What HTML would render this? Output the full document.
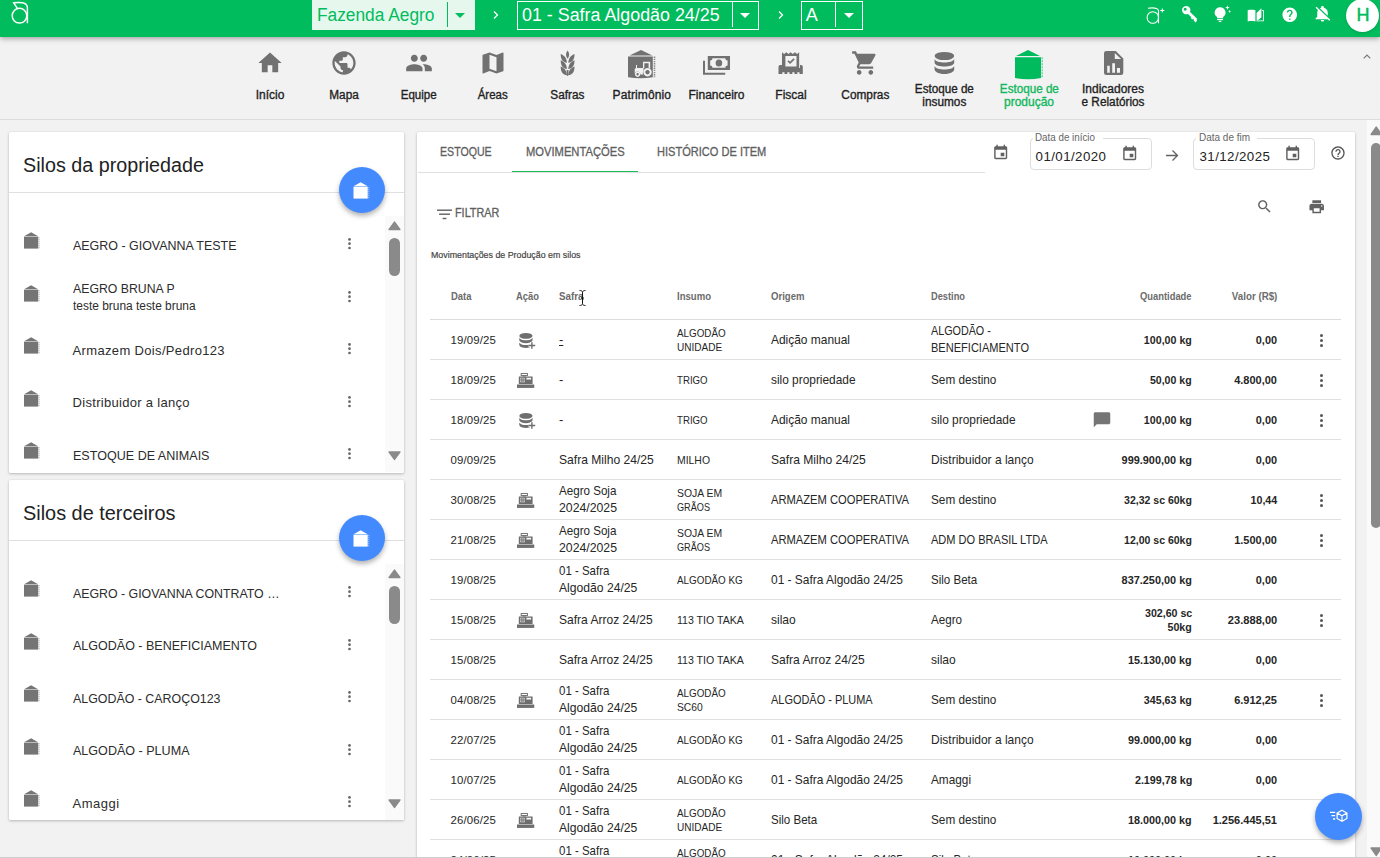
<!DOCTYPE html>
<html lang="pt-BR"><head><meta charset="utf-8"><title>Aegro - Estoque de produção</title>
<style>
html,body{margin:0;padding:0}
body{width:1380px;height:858px;overflow:hidden;position:relative;background:#f2f2f2;font-family:"Liberation Sans",sans-serif;color:#222}
.t{position:absolute;white-space:nowrap;line-height:1}
.abs{position:absolute}
svg{position:absolute;overflow:visible}
#topbar{position:absolute;left:0;top:0;width:1380px;height:37px;background:#00bc5d;box-shadow:0 2px 4px -1px rgba(0,0,0,.2),0 3px 5px 0 rgba(0,0,0,.15);z-index:5}
#nav{position:absolute;left:0;top:37px;width:1380px;height:82px;background:#f2f2f2;border-bottom:1px solid #dcdcdc}
.card{position:absolute;background:#fff;box-shadow:0 1px 3px rgba(0,0,0,.24),0 0 1px rgba(0,0,0,.12);border-radius:1.5px}
.hr{position:absolute;height:1px;background:#e0e0e0}
.fab{position:absolute;width:46px;height:46px;border-radius:50%;background:#448aff;box-shadow:0 3px 5px rgba(0,0,0,.3)}
.dots i{position:absolute;width:3px;height:3px;border-radius:50%;background:#666;left:0}
.dots{position:absolute;width:3px;height:13px}
.d2 i{width:2.700px;height:2.700px}
</style></head><body>
<svg width="0" height="0" style="display:none"><defs>
<symbol id="silo" viewBox="0 0 16 17"><path d="M0.100 4.200 L7.100 0.300 L14.100 4.200 Z"/><path d="M0 4.700 H14.200 V16.600 H0 Z"/><path d="M15.100 5 V16.600" stroke="currentColor" stroke-width="1.600" stroke-dasharray="1.200 0.800" fill="none" opacity=".35"/></symbol>
<symbol id="caret" viewBox="0 0 10 5"><path d="M0 0 H10 L5 5 Z"/></symbol>
<symbol id="cal" viewBox="0 0 24 24"><path d="M17 12h-5v5h5v-5zM16 1v2H8V1H6v2H5c-1.11 0-1.990.900-1.990 2L3 19c0 1.100.890 2 2 2h14c1.100 0 2-.900 2-2V5c0-1.100-.900-2-2-2h-1V1h-2zm3 18H5V8h14v11z"/></symbol>
<symbol id="dbadd" viewBox="0 0 17 16"><ellipse cx="6.900" cy="2.900" rx="6.600" ry="2.900"/><path d="M.300 4.800 C1.500 8.200 12.300 8.200 13.500 4.800 V7.600 C12.300 11 1.500 11 .300 7.600Z"/><path d="M.300 9.500 C1.500 12.900 12.300 12.900 13.500 9.500 V12.300 C12.300 15.900 1.500 15.900 .300 12.300Z"/><path d="M12.900 9.200 V15.800 M9.600 12.500 H16.200" stroke="#fff" stroke-width="3.600" fill="none"/><path d="M12.900 9.200 V15.800 M9.600 12.500 H16.200" stroke="currentColor" stroke-width="1.400" fill="none"/></symbol>
<symbol id="reg" viewBox="0 0 17.500 15"><rect x="0" y="11.500" width="17.500" height="3.400"/><path d="M1.800 3.400 H15.600 V10.900 H1.800 Z M3.300 4.700 V9.300 H7.600 V4.700 Z M9.400 4.700 V6.600 H14 V4.700 Z" fill-rule="evenodd"/><rect x="4.150" y=".450" width="6.300" height="2.100" fill="none" stroke="currentColor" stroke-width=".900"/><rect x="5.600" y="2.500" width="3" height="1"/><path d="M4.750 4.700V9.300M6.150 4.700V9.300M3.300 6.200H7.600M3.300 7.800H7.600" stroke="currentColor" stroke-width=".800"/></symbol>
</defs></svg>

<header id="topbar">
<svg style="left:10.500px;top:2px" width="18" height="23" viewBox="0 0 18 23" fill="none" stroke="#fff" stroke-width="1.500"><path d="M6.700 6.800 L2.700 .800 C8 .300 16 -.200 16.400 5.500 V21.300"/><ellipse cx="8.500" cy="13.700" rx="7.300" ry="7.400"/></svg>
<div class="abs" style="left:312px;top:0;width:163px;height:30px;background:#e6f8ee"></div>
<div class="abs" style="left:447px;top:2px;width:1px;height:25px;background:#00bc5d"></div>
<span class="t" style="top:6.06px;font-size:18px;font-weight:400;color:#00bc5d;left:317.40px;transform:scaleX(0.9616);transform-origin:0 0;">Fazenda Aegro</span>
<svg style="left:455px;top:13px" width="10" height="5" fill="#00bc5d"><use href="#caret"/></svg>
<svg style="left:492.5px;top:10.800px" width="6" height="8" viewBox="0 0 6 8" fill="none" stroke="#fff" stroke-width="1.300"><path d="M1 .500 L4.500 4 L1 7.500"/></svg>
<div class="abs" style="left:517px;top:1px;width:240px;height:27px;border:1px solid #fff"></div>
<div class="abs" style="left:732px;top:2px;width:1px;height:25px;background:#fff"></div>
<span class="t" style="top:6.06px;font-size:18px;font-weight:400;color:#fff;left:522.00px;transform:scaleX(0.9922);transform-origin:0 0;">01 - Safra Algodão 24/25</span>
<svg style="left:740px;top:13px" width="10" height="5" fill="#fff"><use href="#caret"/></svg>
<svg style="left:777.5px;top:10.800px" width="6" height="8" viewBox="0 0 6 8" fill="none" stroke="#fff" stroke-width="1.300"><path d="M1 .500 L4.500 4 L1 7.500"/></svg>
<div class="abs" style="left:801px;top:1px;width:60px;height:27px;border:1px solid #fff"></div>
<div class="abs" style="left:835px;top:2px;width:1px;height:25px;background:#fff"></div>
<span class="t" style="top:6.06px;font-size:18px;font-weight:400;color:#fff;left:805.80px;">A</span>
<svg style="left:843.5px;top:13px" width="10" height="5" fill="#fff"><use href="#caret"/></svg>
<svg style="left:1146px;top:7px" width="19" height="17" viewBox="0 0 19 17" fill="none" stroke="#fff" stroke-width="1.1"><path d="M2 1.300 C6 .600 12.300 .600 12.500 4 V16.200"/><ellipse cx="6.800" cy="10.500" rx="5.700" ry="5.800"/><path d="M16.300 1.500 V5.500 M14.300 3.500 H18.300" stroke-width="1"/></svg>
<svg style="left:0;top:0" width="1380" height="37" viewBox="0 0 1380 37" fill="#fff"><path d="M1188 12 L1196.300 20" stroke="#fff" stroke-width="3" fill="none"/><path d="M1193.600 20.600 l1.700 -1.700 l1.900 1.900 l-1.700 1.700z M1190.800 17.900 l1.500 -1.500 l1.500 1.500 l-1.500 1.500z"/><path fill-rule="evenodd" d="M1186.200 5.900 a4.200 4.200 0 1 0 .010 0z M1185.200 7.700 a1.500 1.500 0 1 1 -.010 0z"/><path d="M1220.100 7.200 a5.400 5.400 0 0 1 3 9.900 v1.200 h-6 v-1.200 a5.400 5.400 0 0 1 3 -9.900z"/><rect x="1217.100" y="19" width="6" height="1.100"/><path d="M1218.300 20.700 h3.600 l-1 1.200 h-1.600z"/><path d="M1227.400 5.300 l.6 1.700 1.700.6 -1.700.6 -.6 1.700 -.6-1.700 -1.700-.6 1.700-.6z M1229.700 9.800 l.45 1.150 1.150.45 -1.150.45 -.45 1.150 -.45-1.150 -1.150-.45 1.150-.45z"/><path d="M1247.700 10.300 C1250 9.700 1253 9.700 1255.400 10.300 V21.500 C1253 20.900 1250 20.900 1247.700 21.500Z"/><path d="M1256.600 13 L1261.400 8.200 V17.300 L1256.600 21.400Z"/><path d="M1262 10.500 H1263.500 V21 C1261.500 20.600 1259 20.700 1257.500 21.300" fill="none" stroke="#fff" stroke-width="1" opacity=".85"/></svg>
<svg style="left:1281px;top:6.300px" width="17.500" height="17.500" viewBox="0 0 24 24" fill="#fff"><path d="M12 2C6.480 2 2 6.480 2 12s4.480 10 10 10 10-4.480 10-10S17.520 2 12 2zm1 17h-2v-2h2v2zm2.070-7.750l-.9.920C13.450 12.900 13 13.500 13 15h-2v-.500c0-1.100.450-2.100 1.170-2.830l1.240-1.260c.370-.360.590-.860.590-1.410 0-1.100-.900-2-2-2s-2 .900-2 2H8c0-2.210 1.790-4 4-4s4 1.790 4 4c0 .880-.360 1.680-.930 2.250z"/></svg>
<svg style="left:1311.500px;top:4px" width="21" height="19.200" viewBox="0 0 24 24" preserveAspectRatio="none" fill="#fff"><path d="M20 18.690L7.840 6.140 5.270 3.490 4 4.760l2.800 2.800v.010c-.520.990-.800 2.160-.800 3.420v5l-2 2v1h13.730l2 2L21 19.720l-1-1.030zM12 22c1.110 0 2-.890 2-2h-4c0 1.110.890 2 2 2zm6-7.320V11c0-3.080-1.640-5.640-4.500-6.320V4c0-.830-.670-1.500-1.500-1.500s-1.500.670-1.500 1.500v.680c-.150.030-.290.080-.420.120-.100.030-.200.070-.300.110h-.010c-.010 0-.010 0-.020.010-.230.090-.460.200-.680.310 0 0-.010 0-.010.010L18 14.680z"/></svg>
<div class="abs" style="left:1346px;top:-1px;width:33px;height:33px;border-radius:50%;background:#fff;box-shadow:0 1px 3px rgba(0,0,0,.15)"></div>
<span class="t" style="top:5.76px;font-size:18px;font-weight:400;color:#00bc5d;left:1356.50px;-webkit-text-stroke:.5px #00bc5d;">H</span>
</header>
<div id="nav"></div>
<nav>
<svg style="left:256.0px;top:49.0px" width="28" height="28" viewBox="0 0 24 24" fill="#717171"><path d="M10 20v-6h4v6h5v-8h3L12 3 2 12h3v8z"/></svg>
<svg style="left:330.0px;top:49.0px" width="28" height="28" viewBox="0 0 24 24" fill="#717171"><path d="M12 2C6.480 2 2 6.480 2 12s4.480 10 10 10 10-4.480 10-10S17.520 2 12 2zm-1 17.930c-3.950-.490-7-3.850-7-7.930 0-.620.080-1.210.210-1.790L9 15v1c0 1.100.900 2 2 2v1.930zm6.900-2.540c-.260-.810-1-1.390-1.900-1.390h-1v-3c0-.550-.450-1-1-1H8v-2h2c.550 0 1-.450 1-1V7h2c1.100 0 2-.900 2-2v-.410c2.930 1.190 5 4.060 5 7.410 0 2.080-.800 3.970-2.100 5.390z"/></svg>
<svg style="left:405.0px;top:49.0px" width="28" height="28" viewBox="0 0 24 24" fill="#717171"><path d="M16 11c1.660 0 2.990-1.340 2.990-3S17.660 5 16 5c-1.660 0-3 1.340-3 3s1.340 3 3 3zm-8 0c1.660 0 2.990-1.340 2.990-3S9.660 5 8 5C6.340 5 5 6.340 5 8s1.340 3 3 3zm0 2c-2.330 0-7 1.170-7 3.500V19h14v-2.500c0-2.330-4.670-3.500-7-3.500zm8 0c-.290 0-.620.020-.970.050 1.160.840 1.970 1.970 1.970 3.450V19h6v-2.500c0-2.330-4.670-3.500-7-3.500z"/></svg>
<svg style="left:479.0px;top:49.0px" width="28" height="28" viewBox="0 0 24 24" fill="#717171"><path d="M20.500 3l-.160.030L15 5.100 9 3 3.360 4.900c-.210.070-.360.250-.360.480V20.500c0 .280.220.500.500.500l.160-.030L9 18.900l6 2.100 5.640-1.900c.210-.070.360-.250.360-.480V3.500c0-.280-.220-.500-.500-.500zM15 19l-6-2.110V5l6 2.110V19z"/></svg>
<svg style="left:0;top:0" width="1380" height="120" viewBox="0 0 1380 120" fill="#717171"><path d="M567.600 50.400 C569.700 53 569.700 56.200 567.600 58.800 C565.500 56.200 565.500 53 567.600 50.400Z"/><path d="M560.700 54.0 C564 55.2 566.400 57.5 567 62.8 C563 62.5 560.500 59.0 560.700 54.0Z"/><path d="M574.500 54.0 C571.200 55.2 568.800 57.5 568.200 62.8 C572.200 62.5 574.700 59.0 574.500 54.0Z"/><path d="M560.700 60.2 C564 61.4 566.400 63.7 567 69.0 C563 68.7 560.500 65.2 560.700 60.2Z"/><path d="M574.500 60.2 C571.200 61.4 568.800 63.7 568.200 69.0 C572.200 68.7 574.700 65.2 574.500 60.2Z"/><path d="M560.700 66.4 C564 67.6 566.400 69.9 567 75.2 C563 74.9 560.500 71.4 560.700 66.4Z"/><path d="M574.500 66.4 C571.200 67.6 568.800 69.9 568.200 75.2 C572.200 74.9 574.700 71.4 574.500 66.4Z"/><path d="M566.700 70 H568.500 V75 L567.600 76.300 L566.700 75Z"/></svg>
<svg style="left:0;top:0" width="1380" height="120" viewBox="0 0 1380 120" fill="#717171"><path d="M629.500 55.400 L641 49.900 L652.500 55.400Z"/><path d="M628 56.500 H652.800 V77.300 Q640.400 79.300 628 77.300Z"/><path d="M654.500 56.500 V77.300" stroke="#8a8a8a" stroke-width="1.600" stroke-dasharray="1.400 .8" fill="none"/><g fill="#f2f2f2"><path d="M643 61.800 H650.200 V68.500 H648.600 V63.200 H644.300 V68 H643Z"/><path d="M636 65 H637 V68 H643.500 V70.500 A4.500 4.500 0 0 0 643 74.500 H640.500 A3 3 0 0 0 634.700 73.500 V69 L636 68Z"/><path fill-rule="evenodd" d="M647.500 68 a4.200 4.200 0 1 0 .010 0z M647.500 70 a2.200 2.200 0 1 1 -.010 0z"/><path fill-rule="evenodd" d="M637.600 71.500 a2.700 2.700 0 1 0 .010 0z M637.600 73 a1.200 1.200 0 1 1 -.010 0z"/></g></svg>
<svg style="left:0;top:0" width="1380" height="120" viewBox="0 0 1380 120" fill="#717171"><path fill-rule="evenodd" d="M707.800 56 H730 V70.100 H707.800Z M712.500 58.300 A2.300 2.300 0 0 1 710.200 60.600 V65.500 A2.300 2.300 0 0 1 712.500 67.800 H725.300 A2.300 2.300 0 0 1 727.600 65.500 V60.600 A2.300 2.300 0 0 1 725.300 58.300Z"/><ellipse cx="718.900" cy="63.050" rx="3.300" ry="3.500"/><path d="M703 60.700 H705 V72.800 H725.200 V74.800 H703Z"/></svg>
<svg style="left:0;top:0" width="1380" height="120" viewBox="0 0 1380 120" fill="#717171"><path fill-rule="evenodd" d="M782 52.300 l2.150 1.800 2.150-1.800 2.150 1.800 2.150-1.800 2.150 1.800 2.150-1.800 2.150 1.800 2.100-1.800 V68.200 H782Z M785.400 56 V66.500 H796.500 V56Z"/><path d="M788 60.800 l2.100 2.100 4-4" stroke="#717171" stroke-width="1.700" fill="none"/><path d="M780.500 65 H782 V68 H800 V65 H801 A1.800 1.800 0 0 1 802.800 66.800 V74 H799.500 V72.300 H797.300 V74 H794.500 V72.300 H792.300 V74 H789.500 V72.300 H787.300 V74 H784.500 V72.300 H782.300 V74 H778.500 V66.800 A1.800 1.800 0 0 1 780.500 65Z"/></svg>
<svg style="left:851.3px;top:48.8px" width="28" height="28" viewBox="0 0 24 24" fill="#717171"><path d="M7 18c-1.100 0-1.990.900-1.990 2S5.900 22 7 22s2-.900 2-2-.900-2-2-2zM1 2v2h2l3.600 7.590-1.350 2.450c-.160.280-.250.610-.250.960 0 1.100.900 2 2 2h12v-2H7.420c-.140 0-.250-.110-.250-.250l.030-.120.900-1.630h7.450c.750 0 1.410-.410 1.750-1.030l3.580-6.490c.080-.140.120-.310.120-.480 0-.550-.450-1-1-1H5.210l-.940-2H1zm16 16c-1.100 0-1.990.900-1.990 2s.890 2 1.990 2 2-.900 2-2-.900-2-2-2z"/></svg>
<svg style="left:0;top:0" width="1380" height="120" viewBox="0 0 1380 120" fill="#717171"><ellipse cx="944.400" cy="56" rx="9.800" ry="4.100"/><path d="M934.600 59 C936 63.700 952.800 63.700 954.200 59 V63 C952.800 67.800 936 67.800 934.600 63Z"/><path d="M934.600 66 C936 70.700 952.800 70.700 954.200 66 V69.800 C952.800 75.400 936 75.400 934.600 69.800Z"/></svg>
<svg style="left:1015px;top:49.500px" width="28" height="30" viewBox="0 0 28 30" fill="#00bb5d"><path d="M1 6 L13 0 L25 6Z"/><path d="M0 7.200 H26 V28 Q13 30.500 0 28Z"/><path d="M27.200 7.200V28" stroke="#00bb5d" stroke-width="1.300" stroke-dasharray="2 1" opacity=".6"/></svg>
<svg style="left:0;top:0" width="1380" height="120" viewBox="0 0 1380 120" fill="#717171"><path fill-rule="evenodd" d="M1106.300 50.900 H1115.800 L1123.300 58.400 V72.700 A2.300 2.300 0 0 1 1121 75 H1106.300 A2.300 2.300 0 0 1 1104 72.700 V53.200 A2.300 2.300 0 0 1 1106.300 50.900Z M1114.800 53.100 V59.100 H1121.100Z M1107.200 65.800 V72.800 H1109.800 V65.800Z M1112.200 63.200 V72.800 H1115 V63.200Z M1116.900 68 V72.800 H1120 V68Z"/></svg>
<span class="t" style="top:88.84px;font-size:12px;font-weight:400;color:#1f1f1f;left:255.66px;-webkit-text-stroke:.35px #1f1f1f;">Início</span>
<span class="t" style="top:88.84px;font-size:12px;font-weight:400;color:#1f1f1f;left:328.98px;transform:scaleX(0.9823);transform-origin:50% 0;-webkit-text-stroke:.35px #1f1f1f;">Mapa</span>
<span class="t" style="top:88.84px;font-size:12px;font-weight:400;color:#1f1f1f;left:400.31px;transform:scaleX(0.9632);transform-origin:50% 0;-webkit-text-stroke:.35px #1f1f1f;">Equipe</span>
<span class="t" style="top:88.84px;font-size:12px;font-weight:400;color:#1f1f1f;left:477.32px;transform:scaleX(0.9567);transform-origin:50% 0;-webkit-text-stroke:.35px #1f1f1f;">Áreas</span>
<span class="t" style="top:88.84px;font-size:12px;font-weight:400;color:#1f1f1f;left:549.66px;transform:scaleX(0.9802);transform-origin:50% 0;-webkit-text-stroke:.35px #1f1f1f;">Safras</span>
<span class="t" style="top:88.84px;font-size:12px;font-weight:400;color:#1f1f1f;left:612.55px;letter-spacing:0.127px;-webkit-text-stroke:.35px #1f1f1f;">Patrimônio</span>
<span class="t" style="top:88.84px;font-size:12px;font-weight:400;color:#1f1f1f;left:688.48px;-webkit-text-stroke:.35px #1f1f1f;">Financeiro</span>
<span class="t" style="top:88.84px;font-size:12px;font-weight:400;color:#1f1f1f;left:775.33px;-webkit-text-stroke:.35px #1f1f1f;">Fiscal</span>
<span class="t" style="top:88.84px;font-size:12px;font-weight:400;color:#1f1f1f;left:840.66px;transform:scaleX(0.9859);transform-origin:50% 0;-webkit-text-stroke:.35px #1f1f1f;">Compras</span>
<span class="t" style="top:82.84px;font-size:12px;font-weight:400;color:#1f1f1f;left:913.64px;transform:scaleX(0.9717);transform-origin:50% 0;-webkit-text-stroke:.35px #1f1f1f;">Estoque de</span>
<span class="t" style="top:95.84px;font-size:12px;font-weight:400;color:#1f1f1f;left:921.66px;transform:scaleX(0.9846);transform-origin:50% 0;-webkit-text-stroke:.35px #1f1f1f;">insumos</span>
<span class="t" style="top:82.84px;font-size:12px;font-weight:400;color:#12b85e;left:998.64px;transform:scaleX(0.9717);transform-origin:50% 0;-webkit-text-stroke:.35px #12b85e;">Estoque de</span>
<span class="t" style="top:95.84px;font-size:12px;font-weight:400;color:#12b85e;left:1003.98px;-webkit-text-stroke:.35px #12b85e;">produção</span>
<span class="t" style="top:82.84px;font-size:12px;font-weight:400;color:#1f1f1f;left:1081.98px;-webkit-text-stroke:.35px #1f1f1f;">Indicadores</span>
<span class="t" style="top:95.84px;font-size:12px;font-weight:400;color:#1f1f1f;left:1080.98px;transform:scaleX(0.9839);transform-origin:50% 0;-webkit-text-stroke:.35px #1f1f1f;">e Relatórios</span>
<svg style="left:1362.500px;top:54px" width="8" height="5" viewBox="0 0 8 5" fill="none" stroke="#777" stroke-width="1.200"><path d="M.7 4.300 L4 1 L7.300 4.300"/></svg>
</nav>
<aside>
<div class="card" style="left:9px;top:132px;width:395px;height:341px"></div>
<span class="t" style="top:154.57px;font-size:20px;font-weight:400;color:#222;left:23.30px;transform:scaleX(0.9865);transform-origin:0 0;">Silos da propriedade</span>
<div class="hr" style="left:9px;top:191.5px;width:395px"></div>
<div class="abs" style="left:385px;top:215.5px;width:19px;height:256.500px;background:#fafafa"></div>
<svg style="left:388px;top:220.5px" width="13" height="9.500" fill="#8a8a8a" stroke="#8a8a8a" stroke-width="1.600" stroke-linejoin="round" viewBox="0 0 13 9.500"><path d="M1.200 8.500 L6.500 1.200 L11.800 8.500Z"/></svg>
<div class="abs" style="left:389.200px;top:238px;width:10.800px;height:38px;border-radius:5.400px;background:#8a8a8a"></div>
<svg style="left:388px;top:451.3px" width="13" height="9.500" fill="#8a8a8a" stroke="#8a8a8a" stroke-width="1.600" stroke-linejoin="round" viewBox="0 0 13 9.500"><path d="M1.200 1 L6.500 8.300 L11.800 1Z"/></svg>
<div class="fab" style="left:338.500px;top:167px"></div>
<svg style="left:353px;top:181.5px" width="17" height="17" fill="#fff" color="#fff"><use href="#silo"/></svg>
<svg style="left:24px;top:232.0px" width="16" height="17" fill="#757575" color="#757575"><use href="#silo"/></svg>
<span class="t" style="top:239.00px;font-size:13px;font-weight:400;color:#2c2c2c;left:72.60px;transform:scaleX(0.9576);transform-origin:0 0;">AEGRO - GIOVANNA TESTE</span>
<svg style="left:348.200px;top:238.2px" width="3" height="12" viewBox="0 0 3 12" fill="#666"><circle cx="1.500" cy="1.400" r="1.350"/><circle cx="1.500" cy="5.700" r="1.350"/><circle cx="1.500" cy="10" r="1.350"/></svg>
<svg style="left:24px;top:284.6px" width="16" height="17" fill="#757575" color="#757575"><use href="#silo"/></svg>
<span class="t" style="top:281.70px;font-size:13px;font-weight:400;color:#2c2c2c;left:72.60px;transform:scaleX(0.9448);transform-origin:0 0;">AEGRO BRUNA P</span>
<span class="t" style="top:299.84px;font-size:12px;font-weight:400;color:#2c2c2c;left:72.60px;transform:scaleX(0.9933);transform-origin:0 0;">teste bruna teste bruna</span>
<svg style="left:348.200px;top:290.8px" width="3" height="12" viewBox="0 0 3 12" fill="#666"><circle cx="1.500" cy="1.400" r="1.350"/><circle cx="1.500" cy="5.700" r="1.350"/><circle cx="1.500" cy="10" r="1.350"/></svg>
<svg style="left:24px;top:337.1px" width="16" height="17" fill="#757575" color="#757575"><use href="#silo"/></svg>
<span class="t" style="top:344.00px;font-size:13px;font-weight:400;color:#2c2c2c;left:72.60px;letter-spacing:0.338px;">Armazem Dois/Pedro123</span>
<svg style="left:348.200px;top:343.3px" width="3" height="12" viewBox="0 0 3 12" fill="#666"><circle cx="1.500" cy="1.400" r="1.350"/><circle cx="1.500" cy="5.700" r="1.350"/><circle cx="1.500" cy="10" r="1.350"/></svg>
<svg style="left:24px;top:389.6px" width="16" height="17" fill="#757575" color="#757575"><use href="#silo"/></svg>
<span class="t" style="top:396.20px;font-size:13px;font-weight:400;color:#2c2c2c;left:72.60px;letter-spacing:0.301px;">Distribuidor a lanço</span>
<svg style="left:348.200px;top:395.8px" width="3" height="12" viewBox="0 0 3 12" fill="#666"><circle cx="1.500" cy="1.400" r="1.350"/><circle cx="1.500" cy="5.700" r="1.350"/><circle cx="1.500" cy="10" r="1.350"/></svg>
<svg style="left:24px;top:442.2px" width="16" height="17" fill="#757575" color="#757575"><use href="#silo"/></svg>
<span class="t" style="top:449.00px;font-size:13px;font-weight:400;color:#2c2c2c;left:72.60px;transform:scaleX(0.9656);transform-origin:0 0;">ESTOQUE DE ANIMAIS</span>
<svg style="left:348.200px;top:448.4px" width="3" height="12" viewBox="0 0 3 12" fill="#666"><circle cx="1.500" cy="1.400" r="1.350"/><circle cx="1.500" cy="5.700" r="1.350"/><circle cx="1.500" cy="10" r="1.350"/></svg>
<div class="card" style="left:9px;top:480px;width:395px;height:340px"></div>
<span class="t" style="top:502.57px;font-size:20px;font-weight:400;color:#222;left:23.30px;transform:scaleX(0.9941);transform-origin:0 0;">Silos de terceiros</span>
<div class="hr" style="left:9px;top:539.5px;width:395px"></div>
<div class="abs" style="left:385px;top:563.5px;width:19px;height:256.500px;background:#fafafa"></div>
<svg style="left:388px;top:568.5px" width="13" height="9.500" fill="#8a8a8a" stroke="#8a8a8a" stroke-width="1.600" stroke-linejoin="round" viewBox="0 0 13 9.500"><path d="M1.200 8.500 L6.500 1.200 L11.800 8.500Z"/></svg>
<div class="abs" style="left:389.200px;top:586px;width:10.800px;height:38px;border-radius:5.400px;background:#8a8a8a"></div>
<svg style="left:388px;top:799.3px" width="13" height="9.500" fill="#8a8a8a" stroke="#8a8a8a" stroke-width="1.600" stroke-linejoin="round" viewBox="0 0 13 9.500"><path d="M1.200 1 L6.500 8.300 L11.800 1Z"/></svg>
<div class="fab" style="left:338.500px;top:515px"></div>
<svg style="left:353px;top:529.5px" width="17" height="17" fill="#fff" color="#fff"><use href="#silo"/></svg>
<svg style="left:24px;top:580.0px" width="16" height="17" fill="#757575" color="#757575"><use href="#silo"/></svg>
<span class="t" style="top:587.00px;font-size:13px;font-weight:400;color:#2c2c2c;left:72.60px;transform:scaleX(0.9498);transform-origin:0 0;">AEGRO - GIOVANNA CONTRATO …</span>
<svg style="left:348.200px;top:586.2px" width="3" height="12" viewBox="0 0 3 12" fill="#666"><circle cx="1.500" cy="1.400" r="1.350"/><circle cx="1.500" cy="5.700" r="1.350"/><circle cx="1.500" cy="10" r="1.350"/></svg>
<svg style="left:24px;top:632.5px" width="16" height="17" fill="#757575" color="#757575"><use href="#silo"/></svg>
<span class="t" style="top:639.20px;font-size:13px;font-weight:400;color:#2c2c2c;left:72.60px;transform:scaleX(0.9624);transform-origin:0 0;">ALGODÃO - BENEFICIAMENTO</span>
<svg style="left:348.200px;top:638.7px" width="3" height="12" viewBox="0 0 3 12" fill="#666"><circle cx="1.500" cy="1.400" r="1.350"/><circle cx="1.500" cy="5.700" r="1.350"/><circle cx="1.500" cy="10" r="1.350"/></svg>
<svg style="left:24px;top:685.1px" width="16" height="17" fill="#757575" color="#757575"><use href="#silo"/></svg>
<span class="t" style="top:692.00px;font-size:13px;font-weight:400;color:#2c2c2c;left:72.60px;transform:scaleX(0.9540);transform-origin:0 0;">ALGODÃO - CAROÇO123</span>
<svg style="left:348.200px;top:691.3px" width="3" height="12" viewBox="0 0 3 12" fill="#666"><circle cx="1.500" cy="1.400" r="1.350"/><circle cx="1.500" cy="5.700" r="1.350"/><circle cx="1.500" cy="10" r="1.350"/></svg>
<svg style="left:24px;top:737.6px" width="16" height="17" fill="#757575" color="#757575"><use href="#silo"/></svg>
<span class="t" style="top:744.20px;font-size:13px;font-weight:400;color:#2c2c2c;left:72.60px;transform:scaleX(0.9657);transform-origin:0 0;">ALGODÃO - PLUMA</span>
<svg style="left:348.200px;top:743.8px" width="3" height="12" viewBox="0 0 3 12" fill="#666"><circle cx="1.500" cy="1.400" r="1.350"/><circle cx="1.500" cy="5.700" r="1.350"/><circle cx="1.500" cy="10" r="1.350"/></svg>
<svg style="left:24px;top:790.2px" width="16" height="17" fill="#757575" color="#757575"><use href="#silo"/></svg>
<span class="t" style="top:797.00px;font-size:13px;font-weight:400;color:#2c2c2c;left:72.60px;letter-spacing:0.484px;">Amaggi</span>
<svg style="left:348.200px;top:796.4px" width="3" height="12" viewBox="0 0 3 12" fill="#666"><circle cx="1.500" cy="1.400" r="1.350"/><circle cx="1.500" cy="5.700" r="1.350"/><circle cx="1.500" cy="10" r="1.350"/></svg>
</aside>
<main>
<div class="card" style="left:417px;top:132px;width:938px;height:740px"></div>
<span class="t" style="top:145.84px;font-size:12px;font-weight:400;color:#5f5f5f;left:440.30px;transform:scaleX(0.8842);transform-origin:0 0;-webkit-text-stroke:.3px #5f5f5f;">ESTOQUE</span>
<span class="t" style="top:145.84px;font-size:12px;font-weight:400;color:#5f5f5f;left:525.70px;transform:scaleX(0.9320);transform-origin:0 0;-webkit-text-stroke:.3px #5f5f5f;">MOVIMENTAÇÕES</span>
<span class="t" style="top:145.84px;font-size:12px;font-weight:400;color:#5f5f5f;left:657.40px;transform:scaleX(0.9210);transform-origin:0 0;-webkit-text-stroke:.3px #5f5f5f;">HISTÓRICO DE ITEM</span>
<div class="hr" style="left:418px;top:172px;width:567px"></div>
<div class="abs" style="left:512px;top:170.500px;width:126px;height:1.500px;background:#18bc58"></div>
<svg style="left:991.800px;top:144.400px" width="17.400" height="17.400" viewBox="0 0 24 24" fill="#616161"><use href="#cal"/></svg>
<div class="abs" style="left:1030px;top:138px;width:120px;height:30px;border:1px solid #ddd;border-radius:4px"></div><div class="abs" style="left:1033px;top:136px;width:70px;height:4px;background:#fff"></div><span class="t" style="top:131.69px;font-size:11px;font-weight:400;color:#666;left:1035.00px;transform:scaleX(0.8920);transform-origin:0 0;">Data de início</span><span class="t" style="top:149.54px;font-size:13.3px;font-weight:400;color:#222;left:1035.60px;letter-spacing:0.426px;">01/01/2020</span><svg style="left:1120.5px;top:144.500px" width="17.400" height="17.400" viewBox="0 0 24 24" fill="#616161"><use href="#cal"/></svg>
<svg style="left:1165px;top:149px" width="14" height="13" viewBox="0 0 14 13" fill="none" stroke="#616161" stroke-width="1.300"><path d="M1 6.500 H12.500 M7.500 1.500 L12.500 6.500 L7.500 11.500"/></svg>
<div class="abs" style="left:1192.7px;top:138px;width:120px;height:30px;border:1px solid #ddd;border-radius:4px"></div><div class="abs" style="left:1195.7px;top:136px;width:61px;height:4px;background:#fff"></div><span class="t" style="top:131.69px;font-size:11px;font-weight:400;color:#666;left:1198.90px;transform:scaleX(0.9067);transform-origin:0 0;">Data de fim</span><span class="t" style="top:149.54px;font-size:13.3px;font-weight:400;color:#222;left:1199.50px;letter-spacing:0.426px;">31/12/2025</span><svg style="left:1284.4px;top:144.500px" width="17.400" height="17.400" viewBox="0 0 24 24" fill="#616161"><use href="#cal"/></svg>
<svg style="left:1329.500px;top:145px" width="16" height="16" viewBox="0 0 24 24" fill="#555"><path d="M11 18h2v-2h-2v2zm1-16C6.480 2 2 6.480 2 12s4.480 10 10 10 10-4.480 10-10S17.520 2 12 2zm0 18c-4.410 0-8-3.590-8-8s3.590-8 8-8 8 3.590 8 8-3.590 8-8 8zm0-14c-2.210 0-4 1.790-4 4h2c0-1.100.900-2 2-2s2 .900 2 2c0 2-3 1.750-3 5h2c0-2.250 3-2.500 3-5 0-2.210-1.790-4-4-4z"/></svg>
<svg style="left:437px;top:209px" width="15" height="11" viewBox="0 0 15 11" fill="#616161"><rect x="0" y=".500" width="15" height="1.400"/><rect x="2.100" y="4.500" width="10.900" height="1.400"/><rect x="5.600" y="8.800" width="3.800" height="1.400"/></svg>
<span class="t" style="top:206.64px;font-size:12px;font-weight:400;color:#5f5f5f;left:455.40px;transform:scaleX(0.9038);transform-origin:0 0;-webkit-text-stroke:.3px #5f5f5f;">FILTRAR</span>
<svg style="left:1256px;top:198px" width="17" height="17" viewBox="0 0 24 24" fill="#616161"><path d="M15.500 14h-.790l-.280-.270C15.410 12.590 16 11.110 16 9.500 16 5.910 13.090 3 9.500 3S3 5.910 3 9.500 5.910 16 9.500 16c1.610 0 3.090-.590 4.230-1.570l.270.280v.790l5 4.990L20.490 19l-4.990-5zm-6 0C7.010 14 5 11.990 5 9.500S7.010 5 9.500 5 14 7.010 14 9.500 11.990 14 9.500 14z"/></svg>
<svg style="left:1308px;top:198px" width="17.400" height="17.400" viewBox="0 0 24 24" fill="#616161"><path d="M19 8H5c-1.660 0-3 1.340-3 3v6h4v4h12v-4h4v-6c0-1.660-1.340-3-3-3zm-3 11H8v-5h8v5zm3-7c-.550 0-1-.450-1-1s.450-1 1-1 1 .450 1 1-.450 1-1 1zm-1-9H6v4h12V3z"/></svg>
<span class="t" style="top:249.96px;font-size:9.5px;font-weight:400;color:#444;left:430.50px;transform:scaleX(0.9313);transform-origin:0 0;-webkit-text-stroke:.2px #444;">Movimentações de Produção em silos</span>
<span class="t" style="top:290.69px;font-size:11px;font-weight:700;color:#6c6c6c;left:450.60px;transform:scaleX(0.8598);transform-origin:0 0;">Data</span>
<span class="t" style="top:290.69px;font-size:11px;font-weight:700;color:#6c6c6c;left:516.00px;transform:scaleX(0.8548);transform-origin:0 0;">Ação</span>
<span class="t" style="top:290.69px;font-size:11px;font-weight:700;color:#6c6c6c;left:559.00px;transform:scaleX(0.8899);transform-origin:0 0;">Safra</span>
<span class="t" style="top:290.69px;font-size:11px;font-weight:700;color:#6c6c6c;left:676.70px;transform:scaleX(0.8690);transform-origin:0 0;">Insumo</span>
<span class="t" style="top:290.69px;font-size:11px;font-weight:700;color:#6c6c6c;left:771.30px;transform:scaleX(0.8698);transform-origin:0 0;">Origem</span>
<span class="t" style="top:290.69px;font-size:11px;font-weight:700;color:#6c6c6c;left:930.60px;transform:scaleX(0.8428);transform-origin:0 0;">Destino</span>
<span class="t" style="top:290.69px;font-size:11px;font-weight:700;color:#6c6c6c;left:1131.48px;transform:scaleX(0.8510);transform-origin:100% 0;">Quantidade</span>
<span class="t" style="top:290.69px;font-size:11px;font-weight:700;color:#6c6c6c;left:1226.04px;transform:scaleX(0.8859);transform-origin:100% 0;">Valor (R$)</span>
<svg style="left:579.300px;top:289.500px" width="7" height="16" viewBox="0 0 7 16" fill="none" stroke="#111" stroke-width="1"><path d="M0.500 .500 C2 .500 3.500 1 3.500 2.500 V13.500 C3.500 15 2 15.500 .500 15.500 M6.500 .500 C5 .500 3.500 1 3.500 2.500 M3.500 13.500 C3.500 15 5 15.500 6.500 15.500 M2 8 H5"/></svg>
<div class="hr" style="left:430px;top:319px;width:911px;background:#dcdcdc"></div>
<span class="t" style="top:334.55px;font-size:11.4px;font-weight:400;color:#262626;left:450.60px;letter-spacing:0.122px;">19/09/25</span>
<svg style="left:518.500px;top:332.5px" width="17" height="16" fill="#6e6e6e" color="#6e6e6e"><use href="#dbadd"/></svg>
<span class="t" style="top:332.70px;font-size:13px;font-weight:400;color:#262626;left:559.00px;text-decoration:underline;">-</span>
<span class="t" style="top:328.32px;font-size:11.2px;font-weight:400;color:#262626;left:676.70px;transform:scaleX(0.8800);transform-origin:0 0;">ALGODÃO</span>
<span class="t" style="top:341.92px;font-size:11.2px;font-weight:400;color:#262626;left:676.70px;transform:scaleX(0.8975);transform-origin:0 0;">UNIDADE</span>
<span class="t" style="top:332.70px;font-size:13px;font-weight:400;color:#262626;left:771.30px;transform:scaleX(0.9186);transform-origin:0 0;">Adição manual</span>
<span class="t" style="top:323.70px;font-size:13px;font-weight:400;color:#262626;left:930.60px;transform:scaleX(0.8277);transform-origin:0 0;">ALGODÃO -</span>
<span class="t" style="top:340.70px;font-size:13px;font-weight:400;color:#262626;left:930.60px;transform:scaleX(0.8496);transform-origin:0 0;">BENEFICIAMENTO</span>
<span class="t" style="top:335.33px;font-size:11.3px;font-weight:700;color:#262626;left:1141.12px;transform:scaleX(0.9435);transform-origin:100% 0;">100,00 kg</span>
<span class="t" style="top:335.33px;font-size:11.3px;font-weight:700;color:#262626;left:1255.40px;transform:scaleX(0.9636);transform-origin:100% 0;">0,00</span>
<div class="dots" style="left:1319.500px;top:333.5px"><i style="top:0;background:#555"></i><i style="top:5px;background:#555"></i><i style="top:10px;background:#555"></i></div>
<div class="hr" style="left:430px;top:359.0px;width:911px"></div>
<span class="t" style="top:374.55px;font-size:11.4px;font-weight:400;color:#262626;left:450.60px;letter-spacing:0.122px;">18/09/25</span>
<svg style="left:517.200px;top:373.0px" width="17.500" height="15" fill="#6e6e6e" color="#6e6e6e"><use href="#reg"/></svg>
<span class="t" style="top:372.70px;font-size:13px;font-weight:400;color:#262626;left:559.00px;">-</span>
<span class="t" style="top:375.02px;font-size:11.2px;font-weight:400;color:#262626;left:676.70px;transform:scaleX(0.8635);transform-origin:0 0;">TRIGO</span>
<span class="t" style="top:372.70px;font-size:13px;font-weight:400;color:#262626;left:771.30px;transform:scaleX(0.9134);transform-origin:0 0;">silo propriedade</span>
<span class="t" style="top:372.70px;font-size:13px;font-weight:400;color:#262626;left:930.60px;transform:scaleX(0.9050);transform-origin:0 0;">Sem destino</span>
<span class="t" style="top:375.33px;font-size:11.3px;font-weight:700;color:#262626;left:1147.41px;transform:scaleX(0.9351);transform-origin:100% 0;">50,00 kg</span>
<span class="t" style="top:375.33px;font-size:11.3px;font-weight:700;color:#262626;left:1233.42px;transform:scaleX(0.9731);transform-origin:100% 0;">4.800,00</span>
<div class="dots" style="left:1319.500px;top:373.5px"><i style="top:0;background:#555"></i><i style="top:5px;background:#555"></i><i style="top:10px;background:#555"></i></div>
<div class="hr" style="left:430px;top:399.0px;width:911px"></div>
<span class="t" style="top:414.55px;font-size:11.4px;font-weight:400;color:#262626;left:450.60px;letter-spacing:0.122px;">18/09/25</span>
<svg style="left:518.500px;top:412.5px" width="17" height="16" fill="#6e6e6e" color="#6e6e6e"><use href="#dbadd"/></svg>
<span class="t" style="top:412.70px;font-size:13px;font-weight:400;color:#262626;left:559.00px;">-</span>
<span class="t" style="top:415.02px;font-size:11.2px;font-weight:400;color:#262626;left:676.70px;transform:scaleX(0.8635);transform-origin:0 0;">TRIGO</span>
<span class="t" style="top:412.70px;font-size:13px;font-weight:400;color:#262626;left:771.30px;transform:scaleX(0.9186);transform-origin:0 0;">Adição manual</span>
<span class="t" style="top:412.70px;font-size:13px;font-weight:400;color:#262626;left:930.60px;transform:scaleX(0.9134);transform-origin:0 0;">silo propriedade</span>
<span class="t" style="top:415.33px;font-size:11.3px;font-weight:700;color:#262626;left:1141.12px;transform:scaleX(0.9435);transform-origin:100% 0;">100,00 kg</span>
<span class="t" style="top:415.33px;font-size:11.3px;font-weight:700;color:#262626;left:1255.40px;transform:scaleX(0.9636);transform-origin:100% 0;">0,00</span>
<svg style="left:1093px;top:410.3px" width="18" height="18" viewBox="0 0 24 24" fill="#757575"><path d="M21 2H3c-1.100 0-2 .900-2 2v18l4-4h16c1.100 0 2-.900 2-2V4c0-1.100-.900-2-2-2z" transform="translate(0 1)"/></svg>
<div class="dots" style="left:1319.500px;top:413.5px"><i style="top:0;background:#555"></i><i style="top:5px;background:#555"></i><i style="top:10px;background:#555"></i></div>
<div class="hr" style="left:430px;top:439.0px;width:911px"></div>
<span class="t" style="top:454.55px;font-size:11.4px;font-weight:400;color:#262626;left:450.60px;letter-spacing:0.122px;">09/09/25</span>
<span class="t" style="top:452.70px;font-size:13px;font-weight:400;color:#262626;left:559.00px;transform:scaleX(0.9303);transform-origin:0 0;">Safra Milho 24/25</span>
<span class="t" style="top:455.02px;font-size:11.2px;font-weight:400;color:#262626;left:676.70px;transform:scaleX(0.9312);transform-origin:0 0;">MILHO</span>
<span class="t" style="top:452.70px;font-size:13px;font-weight:400;color:#262626;left:771.30px;transform:scaleX(0.9303);transform-origin:0 0;">Safra Milho 24/25</span>
<span class="t" style="top:452.70px;font-size:13px;font-weight:400;color:#262626;left:930.60px;transform:scaleX(0.9220);transform-origin:0 0;">Distribuidor a lanço</span>
<span class="t" style="top:455.33px;font-size:11.3px;font-weight:700;color:#262626;left:1119.12px;transform:scaleX(0.9647);transform-origin:100% 0;">999.900,00 kg</span>
<span class="t" style="top:455.33px;font-size:11.3px;font-weight:700;color:#262626;left:1255.40px;transform:scaleX(0.9636);transform-origin:100% 0;">0,00</span>
<div class="hr" style="left:430px;top:479.0px;width:911px"></div>
<span class="t" style="top:494.55px;font-size:11.4px;font-weight:400;color:#262626;left:450.60px;letter-spacing:0.122px;">30/08/25</span>
<svg style="left:517.200px;top:493.0px" width="17.500" height="15" fill="#6e6e6e" color="#6e6e6e"><use href="#reg"/></svg>
<span class="t" style="top:483.70px;font-size:13px;font-weight:400;color:#262626;left:559.00px;transform:scaleX(0.8923);transform-origin:0 0;">Aegro Soja</span>
<span class="t" style="top:500.70px;font-size:13px;font-weight:400;color:#262626;left:559.00px;transform:scaleX(0.9438);transform-origin:0 0;">2024/2025</span>
<span class="t" style="top:488.32px;font-size:11.2px;font-weight:400;color:#262626;left:676.70px;transform:scaleX(0.9320);transform-origin:0 0;">SOJA EM</span>
<span class="t" style="top:501.92px;font-size:11.2px;font-weight:400;color:#262626;left:676.70px;transform:scaleX(0.8164);transform-origin:0 0;">GRÃOS</span>
<span class="t" style="top:492.70px;font-size:13px;font-weight:400;color:#262626;left:771.30px;transform:scaleX(0.8593);transform-origin:0 0;">ARMAZEM COOPERATIVA</span>
<span class="t" style="top:492.70px;font-size:13px;font-weight:400;color:#262626;left:930.60px;transform:scaleX(0.9050);transform-origin:0 0;">Sem destino</span>
<span class="t" style="top:495.33px;font-size:11.3px;font-weight:700;color:#262626;left:1119.12px;transform:scaleX(0.9304);transform-origin:100% 0;">32,32 sc 60kg</span>
<span class="t" style="top:495.33px;font-size:11.3px;font-weight:700;color:#262626;left:1249.12px;transform:scaleX(0.9476);transform-origin:100% 0;">10,44</span>
<div class="dots" style="left:1319.500px;top:493.5px"><i style="top:0;background:#555"></i><i style="top:5px;background:#555"></i><i style="top:10px;background:#555"></i></div>
<div class="hr" style="left:430px;top:519.0px;width:911px"></div>
<span class="t" style="top:534.55px;font-size:11.4px;font-weight:400;color:#262626;left:450.60px;letter-spacing:0.122px;">21/08/25</span>
<svg style="left:517.200px;top:533.0px" width="17.500" height="15" fill="#6e6e6e" color="#6e6e6e"><use href="#reg"/></svg>
<span class="t" style="top:523.70px;font-size:13px;font-weight:400;color:#262626;left:559.00px;transform:scaleX(0.8923);transform-origin:0 0;">Aegro Soja</span>
<span class="t" style="top:540.70px;font-size:13px;font-weight:400;color:#262626;left:559.00px;transform:scaleX(0.9438);transform-origin:0 0;">2024/2025</span>
<span class="t" style="top:528.32px;font-size:11.2px;font-weight:400;color:#262626;left:676.70px;transform:scaleX(0.9320);transform-origin:0 0;">SOJA EM</span>
<span class="t" style="top:541.92px;font-size:11.2px;font-weight:400;color:#262626;left:676.70px;transform:scaleX(0.8164);transform-origin:0 0;">GRÃOS</span>
<span class="t" style="top:532.70px;font-size:13px;font-weight:400;color:#262626;left:771.30px;transform:scaleX(0.8593);transform-origin:0 0;">ARMAZEM COOPERATIVA</span>
<span class="t" style="top:532.70px;font-size:13px;font-weight:400;color:#262626;left:930.60px;transform:scaleX(0.8488);transform-origin:0 0;">ADM DO BRASIL LTDA</span>
<span class="t" style="top:535.33px;font-size:11.3px;font-weight:700;color:#262626;left:1119.12px;transform:scaleX(0.9304);transform-origin:100% 0;">12,00 sc 60kg</span>
<span class="t" style="top:535.33px;font-size:11.3px;font-weight:700;color:#262626;left:1233.42px;transform:scaleX(0.9731);transform-origin:100% 0;">1.500,00</span>
<div class="dots" style="left:1319.500px;top:533.5px"><i style="top:0;background:#555"></i><i style="top:5px;background:#555"></i><i style="top:10px;background:#555"></i></div>
<div class="hr" style="left:430px;top:559.0px;width:911px"></div>
<span class="t" style="top:574.55px;font-size:11.4px;font-weight:400;color:#262626;left:450.60px;letter-spacing:0.122px;">19/08/25</span>
<span class="t" style="top:563.70px;font-size:13px;font-weight:400;color:#262626;left:559.00px;transform:scaleX(0.8828);transform-origin:0 0;">01 - Safra</span>
<span class="t" style="top:580.70px;font-size:13px;font-weight:400;color:#262626;left:559.00px;transform:scaleX(0.9337);transform-origin:0 0;">Algodão 24/25</span>
<span class="t" style="top:575.02px;font-size:11.2px;font-weight:400;color:#262626;left:676.70px;transform:scaleX(0.8806);transform-origin:0 0;">ALGODÃO KG</span>
<span class="t" style="top:572.70px;font-size:13px;font-weight:400;color:#262626;left:771.30px;transform:scaleX(0.9177);transform-origin:0 0;">01 - Safra Algodão 24/25</span>
<span class="t" style="top:572.70px;font-size:13px;font-weight:400;color:#262626;left:930.60px;transform:scaleX(0.8877);transform-origin:0 0;">Silo Beta</span>
<span class="t" style="top:575.33px;font-size:11.3px;font-weight:700;color:#262626;left:1119.12px;transform:scaleX(0.9647);transform-origin:100% 0;">837.250,00 kg</span>
<span class="t" style="top:575.33px;font-size:11.3px;font-weight:700;color:#262626;left:1255.40px;transform:scaleX(0.9636);transform-origin:100% 0;">0,00</span>
<div class="hr" style="left:430px;top:599.0px;width:911px"></div>
<span class="t" style="top:614.55px;font-size:11.4px;font-weight:400;color:#262626;left:450.60px;letter-spacing:0.122px;">15/08/25</span>
<svg style="left:517.200px;top:613.0px" width="17.500" height="15" fill="#6e6e6e" color="#6e6e6e"><use href="#reg"/></svg>
<span class="t" style="top:612.70px;font-size:13px;font-weight:400;color:#262626;left:559.00px;transform:scaleX(0.9252);transform-origin:0 0;">Safra Arroz 24/25</span>
<span class="t" style="top:615.02px;font-size:11.2px;font-weight:400;color:#262626;left:676.70px;transform:scaleX(0.9450);transform-origin:0 0;">113 TIO TAKA</span>
<span class="t" style="top:612.70px;font-size:13px;font-weight:400;color:#262626;left:771.30px;transform:scaleX(0.9234);transform-origin:0 0;">silao</span>
<span class="t" style="top:612.70px;font-size:13px;font-weight:400;color:#262626;left:930.60px;transform:scaleX(0.8933);transform-origin:0 0;">Aegro</span>
<span class="t" style="top:608.38px;font-size:11.3px;font-weight:700;color:#262626;left:1141.73px;transform:scaleX(0.9410);transform-origin:100% 0;">302,60 sc</span>
<span class="t" style="top:622.08px;font-size:11.3px;font-weight:700;color:#262626;left:1166.25px;transform:scaleX(0.9437);transform-origin:100% 0;">50kg</span>
<span class="t" style="top:615.33px;font-size:11.3px;font-weight:700;color:#262626;left:1227.13px;transform:scaleX(0.9828);transform-origin:100% 0;">23.888,00</span>
<div class="dots" style="left:1319.500px;top:613.5px"><i style="top:0;background:#555"></i><i style="top:5px;background:#555"></i><i style="top:10px;background:#555"></i></div>
<div class="hr" style="left:430px;top:639.0px;width:911px"></div>
<span class="t" style="top:654.55px;font-size:11.4px;font-weight:400;color:#262626;left:450.60px;letter-spacing:0.122px;">15/08/25</span>
<span class="t" style="top:652.70px;font-size:13px;font-weight:400;color:#262626;left:559.00px;transform:scaleX(0.9252);transform-origin:0 0;">Safra Arroz 24/25</span>
<span class="t" style="top:655.02px;font-size:11.2px;font-weight:400;color:#262626;left:676.70px;transform:scaleX(0.9450);transform-origin:0 0;">113 TIO TAKA</span>
<span class="t" style="top:652.70px;font-size:13px;font-weight:400;color:#262626;left:771.30px;transform:scaleX(0.9252);transform-origin:0 0;">Safra Arroz 24/25</span>
<span class="t" style="top:652.70px;font-size:13px;font-weight:400;color:#262626;left:930.60px;transform:scaleX(0.9234);transform-origin:0 0;">silao</span>
<span class="t" style="top:655.33px;font-size:11.3px;font-weight:700;color:#262626;left:1125.41px;transform:scaleX(0.9565);transform-origin:100% 0;">15.130,00 kg</span>
<span class="t" style="top:655.33px;font-size:11.3px;font-weight:700;color:#262626;left:1255.40px;transform:scaleX(0.9636);transform-origin:100% 0;">0,00</span>
<div class="hr" style="left:430px;top:679.0px;width:911px"></div>
<span class="t" style="top:694.55px;font-size:11.4px;font-weight:400;color:#262626;left:450.60px;letter-spacing:0.122px;">04/08/25</span>
<svg style="left:517.200px;top:693.0px" width="17.500" height="15" fill="#6e6e6e" color="#6e6e6e"><use href="#reg"/></svg>
<span class="t" style="top:683.70px;font-size:13px;font-weight:400;color:#262626;left:559.00px;transform:scaleX(0.8828);transform-origin:0 0;">01 - Safra</span>
<span class="t" style="top:700.70px;font-size:13px;font-weight:400;color:#262626;left:559.00px;transform:scaleX(0.9337);transform-origin:0 0;">Algodão 24/25</span>
<span class="t" style="top:688.32px;font-size:11.2px;font-weight:400;color:#262626;left:676.70px;transform:scaleX(0.8800);transform-origin:0 0;">ALGODÃO</span>
<span class="t" style="top:701.92px;font-size:11.2px;font-weight:400;color:#262626;left:676.70px;transform:scaleX(0.9179);transform-origin:0 0;">SC60</span>
<span class="t" style="top:692.70px;font-size:13px;font-weight:400;color:#262626;left:771.30px;transform:scaleX(0.8422);transform-origin:0 0;">ALGODÃO - PLUMA</span>
<span class="t" style="top:692.70px;font-size:13px;font-weight:400;color:#262626;left:930.60px;transform:scaleX(0.9050);transform-origin:0 0;">Sem destino</span>
<span class="t" style="top:695.33px;font-size:11.3px;font-weight:700;color:#262626;left:1141.12px;transform:scaleX(0.9435);transform-origin:100% 0;">345,63 kg</span>
<span class="t" style="top:695.33px;font-size:11.3px;font-weight:700;color:#262626;left:1233.42px;transform:scaleX(0.9731);transform-origin:100% 0;">6.912,25</span>
<div class="dots" style="left:1319.500px;top:693.5px"><i style="top:0;background:#555"></i><i style="top:5px;background:#555"></i><i style="top:10px;background:#555"></i></div>
<div class="hr" style="left:430px;top:719.0px;width:911px"></div>
<span class="t" style="top:734.55px;font-size:11.4px;font-weight:400;color:#262626;left:450.60px;letter-spacing:0.122px;">22/07/25</span>
<span class="t" style="top:723.70px;font-size:13px;font-weight:400;color:#262626;left:559.00px;transform:scaleX(0.8828);transform-origin:0 0;">01 - Safra</span>
<span class="t" style="top:740.70px;font-size:13px;font-weight:400;color:#262626;left:559.00px;transform:scaleX(0.9337);transform-origin:0 0;">Algodão 24/25</span>
<span class="t" style="top:735.02px;font-size:11.2px;font-weight:400;color:#262626;left:676.70px;transform:scaleX(0.8806);transform-origin:0 0;">ALGODÃO KG</span>
<span class="t" style="top:732.70px;font-size:13px;font-weight:400;color:#262626;left:771.30px;transform:scaleX(0.9177);transform-origin:0 0;">01 - Safra Algodão 24/25</span>
<span class="t" style="top:732.70px;font-size:13px;font-weight:400;color:#262626;left:930.60px;transform:scaleX(0.9220);transform-origin:0 0;">Distribuidor a lanço</span>
<span class="t" style="top:735.33px;font-size:11.3px;font-weight:700;color:#262626;left:1125.41px;transform:scaleX(0.9565);transform-origin:100% 0;">99.000,00 kg</span>
<span class="t" style="top:735.33px;font-size:11.3px;font-weight:700;color:#262626;left:1255.40px;transform:scaleX(0.9636);transform-origin:100% 0;">0,00</span>
<div class="hr" style="left:430px;top:759.0px;width:911px"></div>
<span class="t" style="top:774.55px;font-size:11.4px;font-weight:400;color:#262626;left:450.60px;letter-spacing:0.122px;">10/07/25</span>
<span class="t" style="top:763.70px;font-size:13px;font-weight:400;color:#262626;left:559.00px;transform:scaleX(0.8828);transform-origin:0 0;">01 - Safra</span>
<span class="t" style="top:780.70px;font-size:13px;font-weight:400;color:#262626;left:559.00px;transform:scaleX(0.9337);transform-origin:0 0;">Algodão 24/25</span>
<span class="t" style="top:775.02px;font-size:11.2px;font-weight:400;color:#262626;left:676.70px;transform:scaleX(0.8806);transform-origin:0 0;">ALGODÃO KG</span>
<span class="t" style="top:772.70px;font-size:13px;font-weight:400;color:#262626;left:771.30px;transform:scaleX(0.9177);transform-origin:0 0;">01 - Safra Algodão 24/25</span>
<span class="t" style="top:772.70px;font-size:13px;font-weight:400;color:#262626;left:930.60px;transform:scaleX(0.9075);transform-origin:0 0;">Amaggi</span>
<span class="t" style="top:775.33px;font-size:11.3px;font-weight:700;color:#262626;left:1131.70px;transform:scaleX(0.9520);transform-origin:100% 0;">2.199,78 kg</span>
<span class="t" style="top:775.33px;font-size:11.3px;font-weight:700;color:#262626;left:1255.40px;transform:scaleX(0.9636);transform-origin:100% 0;">0,00</span>
<div class="hr" style="left:430px;top:799.0px;width:911px"></div>
<span class="t" style="top:814.55px;font-size:11.4px;font-weight:400;color:#262626;left:450.60px;letter-spacing:0.122px;">26/06/25</span>
<svg style="left:517.200px;top:813.0px" width="17.500" height="15" fill="#6e6e6e" color="#6e6e6e"><use href="#reg"/></svg>
<span class="t" style="top:803.70px;font-size:13px;font-weight:400;color:#262626;left:559.00px;transform:scaleX(0.8828);transform-origin:0 0;">01 - Safra</span>
<span class="t" style="top:820.70px;font-size:13px;font-weight:400;color:#262626;left:559.00px;transform:scaleX(0.9337);transform-origin:0 0;">Algodão 24/25</span>
<span class="t" style="top:808.32px;font-size:11.2px;font-weight:400;color:#262626;left:676.70px;transform:scaleX(0.8800);transform-origin:0 0;">ALGODÃO</span>
<span class="t" style="top:821.92px;font-size:11.2px;font-weight:400;color:#262626;left:676.70px;transform:scaleX(0.8975);transform-origin:0 0;">UNIDADE</span>
<span class="t" style="top:812.70px;font-size:13px;font-weight:400;color:#262626;left:771.30px;transform:scaleX(0.8877);transform-origin:0 0;">Silo Beta</span>
<span class="t" style="top:812.70px;font-size:13px;font-weight:400;color:#262626;left:930.60px;transform:scaleX(0.9050);transform-origin:0 0;">Sem destino</span>
<span class="t" style="top:815.33px;font-size:11.3px;font-weight:700;color:#262626;left:1125.41px;transform:scaleX(0.9565);transform-origin:100% 0;">18.000,00 kg</span>
<span class="t" style="top:815.33px;font-size:11.3px;font-weight:700;color:#262626;left:1211.43px;transform:scaleX(0.9747);transform-origin:100% 0;">1.256.445,51</span>
<div class="hr" style="left:430px;top:839.0px;width:911px"></div>
<span class="t" style="top:854.55px;font-size:11.4px;font-weight:400;color:#262626;left:450.60px;letter-spacing:0.122px;">24/06/25</span>
<span class="t" style="top:843.70px;font-size:13px;font-weight:400;color:#262626;left:559.00px;transform:scaleX(0.8828);transform-origin:0 0;">01 - Safra</span>
<span class="t" style="top:860.70px;font-size:13px;font-weight:400;color:#262626;left:559.00px;transform:scaleX(0.9337);transform-origin:0 0;">Algodão 24/25</span>
<span class="t" style="top:848.32px;font-size:11.2px;font-weight:400;color:#262626;left:676.70px;transform:scaleX(0.8800);transform-origin:0 0;">ALGODÃO</span>
<span class="t" style="top:861.92px;font-size:11.2px;font-weight:400;color:#262626;left:676.70px;transform:scaleX(0.8975);transform-origin:0 0;">UNIDADE</span>
<span class="t" style="top:852.70px;font-size:13px;font-weight:400;color:#262626;left:771.30px;transform:scaleX(0.9177);transform-origin:0 0;">01 - Safra Algodão 24/25</span>
<span class="t" style="top:852.70px;font-size:13px;font-weight:400;color:#262626;left:930.60px;transform:scaleX(0.8877);transform-origin:0 0;">Silo Beta</span>
<span class="t" style="top:855.33px;font-size:11.3px;font-weight:700;color:#262626;left:1125.41px;transform:scaleX(0.9565);transform-origin:100% 0;">10.000,00 kg</span>
<span class="t" style="top:855.33px;font-size:11.3px;font-weight:700;color:#262626;left:1255.40px;transform:scaleX(0.9636);transform-origin:100% 0;">0,00</span>
<div class="hr" style="left:430px;top:879.0px;width:911px"></div>
</main>
<div class="fab" style="left:1315px;top:793px;width:47px;height:47px"></div>
<svg style="left:0;top:0" width="1380" height="858" viewBox="0 0 1380 858" fill="none" stroke="#fff" stroke-width="1.200"><path d="M1330 812.300H1335.200M1331.500 815.700H1335.200M1333 819H1335.200" stroke-width="1.300"/><path d="M1342 810.300 L1346.900 813 V818.500 L1342 821.200 L1337.100 818.500 V813Z M1337.100 813 L1342 815.800 L1346.900 813 M1342 815.800 V821.200"/></svg>
<div class="abs" style="left:1367px;top:120px;width:13px;height:738px;background:#fafafa"></div>
<svg style="left:1370.300px;top:126.300px" width="12.500" height="9.500" viewBox="0 0 12.500 9.500" fill="#8a8a8a" stroke="#8a8a8a" stroke-width="1.600" stroke-linejoin="round"><path d="M1.200 8.500 L6.250 1.200 L11.300 8.500Z"/></svg>
<div class="abs" style="left:1371px;top:143px;width:10px;height:384.500px;border-radius:5px;background:#8a8a8a"></div>
<svg style="left:1370.300px;top:847.300px" width="12.500" height="9.500" viewBox="0 0 12.500 9.500" fill="#8a8a8a" stroke="#8a8a8a" stroke-width="1.600" stroke-linejoin="round"><path d="M1.200 1 L6.250 8.300 L11.300 1Z"/></svg>
<div class="abs" style="left:0;top:857px;width:1380px;height:1px;background:#cfcfcf"></div>
</body></html>
